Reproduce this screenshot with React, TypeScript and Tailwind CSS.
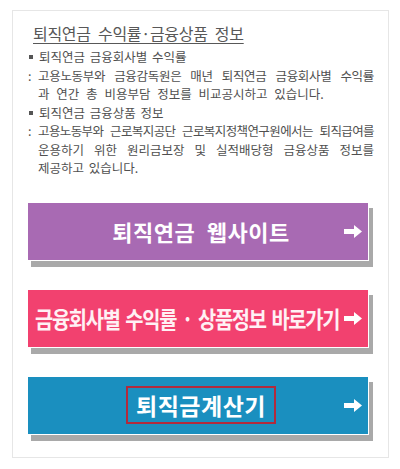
import React from 'react';

const font = { fontFamily: '"Noto Sans CJK KR", "Noto Sans", sans-serif' };

function Arrow() {
  return (
    <svg width="18" height="13" viewBox="0 0 18 13" className="shrink-0">
      <path d="M0 4h10V0l8 6.5-8 6.5V9H0z" fill="#ffffff" />
    </svg>
  );
}

function LinkButton({ color, children, pl = 'pl-[30px]' }: { color: string; children: React.ReactNode; pl?: string }) {
  return (
    <div
      className={`flex items-center h-[59px] w-[342px] border border-white shadow-[4px_6px_0_#a9a9a9] pr-[6px] ${pl} ${color}`}
    >
      <div className="flex-1 min-w-0 flex justify-center">{children}</div>
      <Arrow />
    </div>
  );
}

export default function App() {
  return (
    <div className="bg-white w-[400px] h-[469px] pt-[10px] pl-[12px]" style={font}>
      <div className="w-[377px] h-[448px] border border-[#e6e6e6] flex flex-col">
        {/* 안내 문구 */}
        <div className="pl-[20px] pr-[14px] pt-[12px] text-[#505050]">
          <h1 className="text-[16px] leading-[20px] underline underline-offset-[3px] decoration-1 tracking-[-0.3px] [word-spacing:4px] text-[#585858]">
            퇴직연금 수익률·금융상품 정보
          </h1>
          <div className="mt-[5px] text-[12.5px] leading-[18.5px] [word-spacing:2px]">
            <div className="flex items-center">
              <span className="w-[4px] h-[4px] bg-[#555] mr-[6px] ml-[-4px]" />
              퇴직연금 금융회사별 수익률
            </div>
            <div className="flex">
              <span className="w-[10px] ml-[-5px]">:</span>
              <span className="flex-1 [text-align-last:justify] tracking-[-0.3px] [word-spacing:0px]">고용노동부와 금융감독원은 매년 퇴직연금 금융회사별 수익률</span>
            </div>
            <div className="pl-[5px] [word-spacing:4px]">과 연간 총 비용부담 정보를 비교공시하고 있습니다.</div>
            <div className="flex items-center">
              <span className="w-[4px] h-[4px] bg-[#555] mr-[6px] ml-[-4px]" />
              퇴직연금 금융상품 정보
            </div>
            <div className="flex">
              <span className="w-[10px] ml-[-5px]">:</span>
              <span className="flex-1 [text-align-last:justify] tracking-[-0.6px] [word-spacing:0px]">고용노동부와 근로복지공단 근로복지정책연구원에서는 퇴직급여를</span>
            </div>
            <div className="pl-[5px] [text-align-last:justify]">운용하기 위한 원리금보장 및 실적배당형 금융상품 정보를</div>
            <div className="pl-[5px]">제공하고 있습니다.</div>
          </div>
        </div>

        {/* 바로가기 버튼 */}
        <div className="flex flex-col gap-[28px] pl-[14px] mt-[24px]">
          <LinkButton color="bg-[#a86ab3]">
            <span className="text-white text-[22px] font-bold tracking-[0.5px] [word-spacing:6px]">퇴직연금 웹사이트</span>
          </LinkButton>
          <LinkButton color="bg-[#f2416f]" pl="pl-[3px]">
            <span className="text-[#fff0f4] text-[23px] font-bold whitespace-nowrap tracking-[-1.5px] [word-spacing:3px] scale-x-[0.86] origin-left inline-block w-[306px]">
              금융회사별 수익률 · 상품정보 바로가기
            </span>
          </LinkButton>
          <LinkButton color="bg-[#1a8fbf]">
            <span className="text-white text-[23px] font-bold border-2 border-[#b22a3c] px-[8px] leading-[34px] tracking-[0.5px]">
              퇴직금계산기
            </span>
          </LinkButton>
        </div>
      </div>
    </div>
  );
}
